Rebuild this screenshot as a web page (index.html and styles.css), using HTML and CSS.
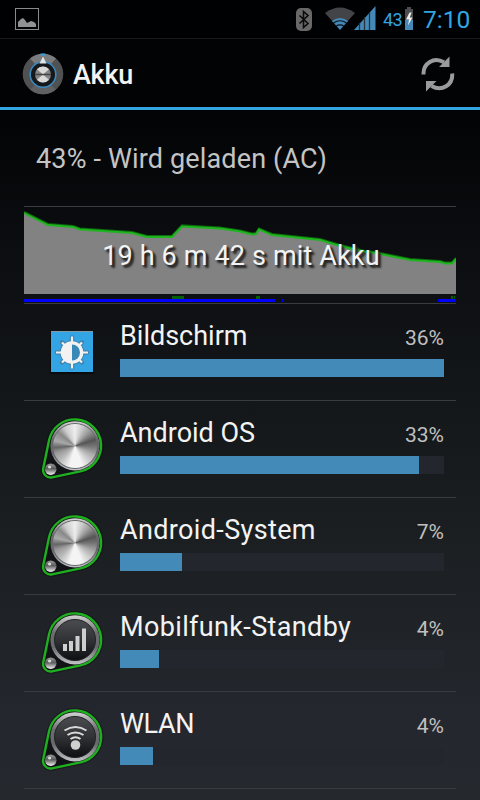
FILE: index.html
```
<!DOCTYPE html>
<html lang="de">
<head>
    <meta charset="utf-8">
    <title>Akku</title>
    <link rel="stylesheet" href="styles.css">
</head>
<body>
    <!-- shared dial shape for the system entries -->
    <svg class="defs" width="0" height="0">
        <defs>
            <linearGradient id="rim" x1="0" y1="0" x2="0" y2="1">
                <stop offset="0" stop-color="#d4d4d4"/>
                <stop offset="0.35" stop-color="#6c6c6e"/>
                <stop offset="0.65" stop-color="#66686b"/>
                <stop offset="1" stop-color="#c2c4c8"/>
            </linearGradient>
            <linearGradient id="face" x1="0" y1="0" x2="0" y2="1">
                <stop offset="0" stop-color="#4b4c4f"/>
                <stop offset="0.5" stop-color="#303235"/>
                <stop offset="1" stop-color="#0c0e12"/>
            </linearGradient>
            <linearGradient id="stud" x1="0" y1="0" x2="0" y2="1">
                <stop offset="0" stop-color="#9a9a9a"/>
                <stop offset="0.45" stop-color="#5c5c5e"/>
                <stop offset="1" stop-color="#f4f4f4"/>
            </linearGradient>
            <symbol id="dial" viewBox="0 0 72 72">
                <path d="M13.1 27.1A26.3 26.3 0 1 1 44.4 58.4L16 64.3A7.5 7.5 0 0 1 7.2 55.5Z" fill="#0b0d10" stroke="#080a0c" stroke-opacity=".35" stroke-width="5"/>
                <path d="M13.1 27.1A26.3 26.3 0 1 1 44.4 58.4L16 64.3A7.5 7.5 0 0 1 7.2 55.5Z" fill="#111316" stroke="#1fb01f" stroke-width="2.4"/>
                <circle cx="39" cy="32.8" r="24.6" fill="url(#rim)"/>
                <circle cx="14.7" cy="56.2" r="5.8" fill="url(#stud)"/>
                <circle cx="13.6" cy="54" r="1.6" fill="#d8d8d8"/>
            </symbol>
        </defs>
    </svg>

    <div class="statusbar">
        <svg class="picture" width="24" height="22" viewBox="0 0 24 22">
            <rect x=".5" y=".5" width="23" height="21" fill="none" stroke="#8a8a8a"/>
            <path d="M3 19v-5l3-3 2-1 2 2 2 3 4-2 3 1 2 2v3z" fill="#929292"/>
        </svg>
        <div class="status-icons">
            <svg class="bluetooth" width="16" height="24" viewBox="0 0 16 24">
                <rect width="16" height="23" rx="5" fill="#686868"/>
                <path d="M3.5 7.5l8.5 8-4.5 4V3.5l4.5 4-8.5 8" fill="none" stroke="#0a0a0a" stroke-width="1.6"/>
            </svg>
            <svg class="wifi" width="30" height="24" viewBox="0 0 30 24">
                <path d="M0 6Q15-5 30 6L22 15H8Z" fill="#424447"/>
                <path d="M7 14Q15 8 23 14L15 23Z" fill="#4489b8"/>
                <path d="M8.500 16Q15 11.500 21.500 16M11 19.200Q15 16.500 19 19.200" fill="none" stroke="#0a1015" stroke-width="1.200"/>
            </svg>
            <svg class="signal" width="22" height="24" viewBox="0 0 22 24">
                <path d="M0 24L21.500 0V24Z" fill="#4489b8"/>
                <path d="M5.500 17v7M10.500 11v13M15.500 6v18" stroke="#26333e" stroke-width="1.300"/>
            </svg>
            <span class="level">43</span>
            <svg class="battery" width="8" height="23" viewBox="0 0 8 23">
                <path d="M2 0h4v2h2v11H0V2h2z" fill="#4d4d4f"/>
                <rect y="13" width="8" height="10" fill="#4489b8"/>
                <path d="M4.500 5.500L1 12.500h3l-1 6 4.500-8H4.800l1.800-5z" fill="#eee"/>
            </svg>
            <span class="clock">7:10</span>
        </div>
    </div>

    <div class="actionbar">
        <svg width="42" height="42" viewBox="0 0 42 42">
            <circle cx="21" cy="21" r="20.3" fill="#505153"/>
            <path d="M8 5.500A20.300 20.300 0 0 1 34 5.500L29 11A13 13 0 0 0 13 11Z" fill="#7b7c7e"/>
            <path d="M8 36.500A20.300 20.300 0 0 0 34 36.500L28 31H14Z" fill="#606163"/>
            <circle cx="21" cy="21.500" r="12.800" fill="#15181d" stroke="#3a8cc0" stroke-width="1.500"/>
            <path d="M21 3.500l3.500 7h-7z" fill="#e4e4e4"/>
            <path d="M18.500 1.500h5" stroke="#33a5df" stroke-width="2"/>
            <circle cx="21" cy="21.500" r="8" fill="#858585"/>
            <path d="M21 21.500L15 16.200A8 8 0 0 1 27 16.200ZM21 21.500L15 26.800A8 8 0 0 0 27 26.800Z" fill="#d9d9d9"/>
            <path d="M13 21.500h16" stroke="#444" stroke-width="1.500"/>
        </svg>
        <h1>Akku</h1>
        <svg class="refresh" width="34" height="36" viewBox="0 0 34 36">
            <g fill="none" stroke="#9b9b9b" stroke-width="4">
                <path d="M2.500 18.500C2 7 13 .5 23 6.300"/>
                <path d="M31.200 17.500C32 29 21 36 10.500 30"/>
            </g>
            <path d="M28.500 .5V11H18zM5 35.500V25H15.500z" fill="#9b9b9b"/>
        </svg>
    </div>

    <div class="content">
        <p class="state">43% - Wird geladen (AC)</p>

        <div class="history">
            <svg width="432" height="96" viewBox="0 0 432 96">
                <path d="M0 5L24 17L49 19L56 21.500L108 25L123 29L148 29L158 18.500L196 20.500L216 23.500L228 26.500L232 26L235 21.500L248 27L296 32L316 38L341 44L351 45L386 52L416 54L421 55.500L428 55.500L432 51V87H0Z" fill="#828282"/>
                <g fill="none">
                    <path d="M0 5L24 17L49 19L56 21.500L108 25L123 29L148 29L158 18.500L196 20.500L216 23.500L228 26.500L232 26L235 21.500L248 27L296 32L316 38L341 44L351 45L386 52L416 54L421 55.500L428 55.500L432 51" stroke="#0b680b" stroke-width="2.200"/>
                    <path d="M0 6L24 18L49 20L56 22.500L108 26L123 30L148 30L158 19.500L196 21.500L216 24.500L228 27.500L232 27L235 22.500L248 28L296 33L316 39L341 45L351 46L386 53L416 55L421 56.500L428 56.500L432 52" stroke="#1fb41f" stroke-width="1.900"/>
                </g>
                <path d="M148 90.500h12M232 90.500h4M427 90.500h2M430 90.500h1" stroke="#076007" stroke-width="3"/>
                <path d="M0 93.500h251M258 93.500h1M414 93.500h1M416 93.500h16" stroke="#0000ff" stroke-width="3"/>
            </svg>
            <span class="duration">19 h 6 m 42 s mit Akku</span>
        </div>

        <div class="entry">
            <div class="icon">
                <svg width="72" height="72" viewBox="0 0 72 72">
                    <rect x="14" y="15" width="44" height="43" rx="1" fill="#090b0d"/>
                    <rect x="15" y="15" width="42" height="41" fill="#33a5e5"/>
                    <path d="M15 15.500h42" stroke="#8399a4"/>
                    <path d="M36 21.500v30M21 36.500h30M26 26.500l20 20M46 26.500l-20 20" stroke="#4183ac" stroke-width="4.500" stroke-linecap="round"/>
                    <circle cx="36" cy="36.500" r="12.300" fill="#4183ac"/>
                    <path d="M36 20.500v32M20 36.500h32M26 26.500l20 20M46 26.500l-20 20" stroke="#f0f0f0" stroke-width="2.200"/>
                    <circle cx="36" cy="36.500" r="11.300" fill="#f2f2f2"/>
                    <path d="M36 28.500a8 8 0 0 1 0 16z" fill="#3888b8"/>
                </svg>
            </div>
            <div class="usage">
                <div class="label"><span class="name">Bildschirm</span><span class="percent">36%</span></div>
                <div class="track"><div class="bar" style="width: 100%"></div></div>
            </div>
        </div>

        <div class="entry">
            <div class="icon">
                <svg width="72" height="72"><use href="#dial"/></svg>
                <div class="metal"></div>
            </div>
            <div class="usage">
                <div class="label"><span class="name">Android OS</span><span class="percent">33%</span></div>
                <div class="track"><div class="bar" style="width: 299px"></div></div>
            </div>
        </div>

        <div class="entry">
            <div class="icon">
                <svg width="72" height="72"><use href="#dial"/></svg>
                <div class="metal"></div>
            </div>
            <div class="usage">
                <div class="label"><span class="name long">Android-System</span><span class="percent">7%</span></div>
                <div class="track"><div class="bar" style="width: 62px"></div></div>
            </div>
        </div>

        <div class="entry">
            <div class="icon">
                <svg width="72" height="72" viewBox="0 0 72 72">
                    <use href="#dial"/>
                    <circle cx="39" cy="33" r="20.500" fill="url(#face)" stroke="#202225"/>
                    <path d="M27 37h4v7h-4zM33 34h4v10h-4zM39.500 29h4v15h-4zM46 21.500h4V44h-4z" fill="#cfcfcf"/>
                </svg>
            </div>
            <div class="usage">
                <div class="label"><span class="name long">Mobilfunk-Standby</span><span class="percent">4%</span></div>
                <div class="track"><div class="bar" style="width: 39px"></div></div>
            </div>
        </div>

        <div class="entry">
            <div class="icon">
                <svg width="72" height="72" viewBox="0 0 72 72">
                    <use href="#dial"/>
                    <circle cx="39" cy="33" r="20.500" fill="url(#face)" stroke="#202225"/>
                    <g fill="none" stroke="#dadada" stroke-width="2">
                        <path d="M28.500 26.500Q39.500 19.500 50.500 26.500M31.500 31Q39.500 25.800 47.500 31M34.500 35Q39.500 31.500 44.500 35"/>
                    </g>
                    <circle cx="39.500" cy="41" r="4.800" fill="#cfcfcf"/>
                </svg>
            </div>
            <div class="usage">
                <div class="label"><span class="name short">WLAN</span><span class="percent">4%</span></div>
                <div class="track"><div class="bar" style="width: 33px"></div></div>
            </div>
        </div>
    </div>
</body>
</html>
```

FILE: styles.css
```
body {
    margin: 0;
    width: 480px;
    height: 800px;
    overflow: hidden;
    display: flex;
    flex-direction: column;
    font-family: Roboto, "Noto Sans", sans-serif;
    color: #f3f3f3;
    background: linear-gradient(#020305 0, #020305 110px, #0c0e11 260px, #14171a 400px, #1b1f22 540px, #202428 640px, #24272e 720px, #25282d 800px);
}
svg {
    display: block;
    flex: none;
}
.defs {
    position: absolute;
}
.statusbar {
    height: 38px;
    flex: none;
    display: flex;
    justify-content: space-between;
    padding: 0 11px 0 15px;
    border-bottom: 1px solid #17181a;
    background: #000103;
    color: #33a5e0;
}
.picture {
    margin-top: 8px;
}
.status-icons {
    display: flex;
    align-items: flex-start;
}
.bluetooth {
    margin: 8px 13px 0 0;
}
.wifi {
    margin: 7px -1px 0 0;
}
.signal {
    margin: 6px 7px 0 0;
}
.level {
    width: 22px;
    font-size: 18px;
    line-height: 39px;
    letter-spacing: -0.5px;
}
.battery {
    margin-top: 7px;
}
.clock {
    width: 46px;
    margin-left: 10px;
    font-size: 24.5px;
    line-height: 39px;
    white-space: nowrap;
}
.actionbar {
    height: 68px;
    flex: none;
    display: flex;
    align-items: center;
    padding: 0 25px 0 22px;
    border-bottom: 3px solid #33a5e0;
}
.actionbar svg {
    margin-top: 2px;
}
.actionbar h1 {
    flex: 1;
    margin: 4px 0 0 9px;
    font-size: 27px;
    font-weight: 500;
    letter-spacing: -0.3px;
}
.content {
    padding: 0 24px;
}
.state {
    height: 96px;
    margin: 0;
    padding-left: 12px;
    font-size: 27px;
    line-height: 98px;
    letter-spacing: 0.15px;
    color: #c4c4c4;
}
.history {
    position: relative;
    height: 96px;
    border-top: 1px solid #3a3c3f;
    border-bottom: 1px solid #3a3c3f;
}
/* caption lies over the battery curve */
.duration {
    position: absolute;
    top: 33px;
    left: 0;
    width: 434px;
    text-align: center;
    font-size: 27px;
    line-height: 32px;
    letter-spacing: 0.15px;
    text-shadow: 2px 2px 2px #222, 3px 3px 2px #333;
}
.entry {
    height: 96px;
    display: flex;
    align-items: center;
    gap: 12px;
    padding: 0 12px;
    border-bottom: 1px solid #383b3f;
}
.icon {
    position: relative;
    width: 72px;
    height: 72px;
}
/* brushed metal knob on top of the dial */
.metal {
    position: absolute;
    left: 17px;
    top: 11px;
    width: 44px;
    height: 44px;
    border-radius: 50%;
    box-shadow: 0 0 0 1px #66686a;
    background: conic-gradient(#eee 0deg, #c9c9c9 22deg, #999 45deg, #555 72deg, #777 92deg, #aaa 115deg, #ccc 135deg, #f4f4f4 160deg, #f4f4f4 195deg, #bbb 225deg, #999 250deg, #666 266deg, #aaa 285deg, #888 310deg, #ccc 330deg, #eee 360deg);
}
.usage {
    flex: 1;
    height: 96px;
}
.label {
    height: 55px;
    display: flex;
    justify-content: space-between;
    align-items: baseline;
}
.name {
    font-size: 27px;
    line-height: 64px;
}
.name.long {
    letter-spacing: 0.36px;
}
.name.short {
    letter-spacing: -0.4px;
}
.percent {
    font-size: 21px;
    color: #c0c0c0;
}
.track {
    height: 18px;
    background: #23262d;
}
.bar {
    height: 18px;
    background: #448ab8;
}
```
